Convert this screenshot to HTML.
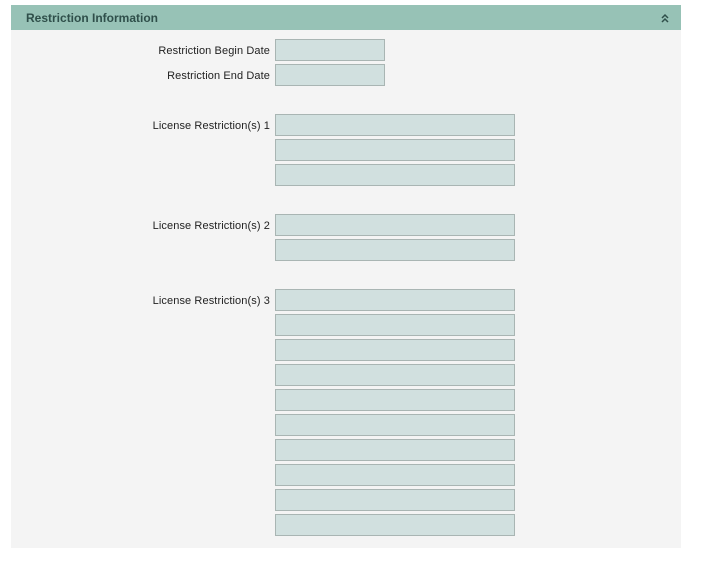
<!DOCTYPE html><html><head><style>
body{margin:0;background:#fff;width:708px;height:561px;position:relative;font-family:"Liberation Sans",sans-serif;}
.h{position:absolute;left:11px;top:5px;width:670px;height:25px;background:#97c2b6;}
.h span{position:absolute;left:15px;top:6px;font-size:12px;font-weight:bold;color:#2f4f4a;}
.h svg{position:absolute;right:12px;top:8px;}
.b{position:absolute;left:11px;top:30px;width:670px;height:518px;background:#f4f4f4;}
.i{position:absolute;left:275px;width:108px;height:20px;background:#d1e0df;border:1px solid #a9b5b3;}
.w{width:238px;}
.l{position:absolute;right:438px;font-size:11px;color:#222;letter-spacing:0.1px;}
</style></head><body>
<div class="h"><span>Restriction Information</span><svg width="8" height="10" viewBox="0 0 8 10"><path d="M1 5L4 2L7 5M1 9L4 6L7 9" stroke="#2f4f4a" stroke-width="1.5" fill="none"/></svg></div>
<div class="b"></div>
<div class="l" style="top:45px">Restriction Begin Date</div>
<div class="l" style="top:70px">Restriction End Date</div>
<div class="l" style="top:120px">License Restriction(s) 1</div>
<div class="l" style="top:220px">License Restriction(s) 2</div>
<div class="l" style="top:295px">License Restriction(s) 3</div>
<div class="i" style="top:39px"></div>
<div class="i" style="top:64px"></div>
<div class="i w" style="top:114px"></div>
<div class="i w" style="top:139px"></div>
<div class="i w" style="top:164px"></div>
<div class="i w" style="top:214px"></div>
<div class="i w" style="top:239px"></div>
<div class="i w" style="top:289px"></div>
<div class="i w" style="top:314px"></div>
<div class="i w" style="top:339px"></div>
<div class="i w" style="top:364px"></div>
<div class="i w" style="top:389px"></div>
<div class="i w" style="top:414px"></div>
<div class="i w" style="top:439px"></div>
<div class="i w" style="top:464px"></div>
<div class="i w" style="top:489px"></div>
<div class="i w" style="top:514px"></div>
</body></html>
